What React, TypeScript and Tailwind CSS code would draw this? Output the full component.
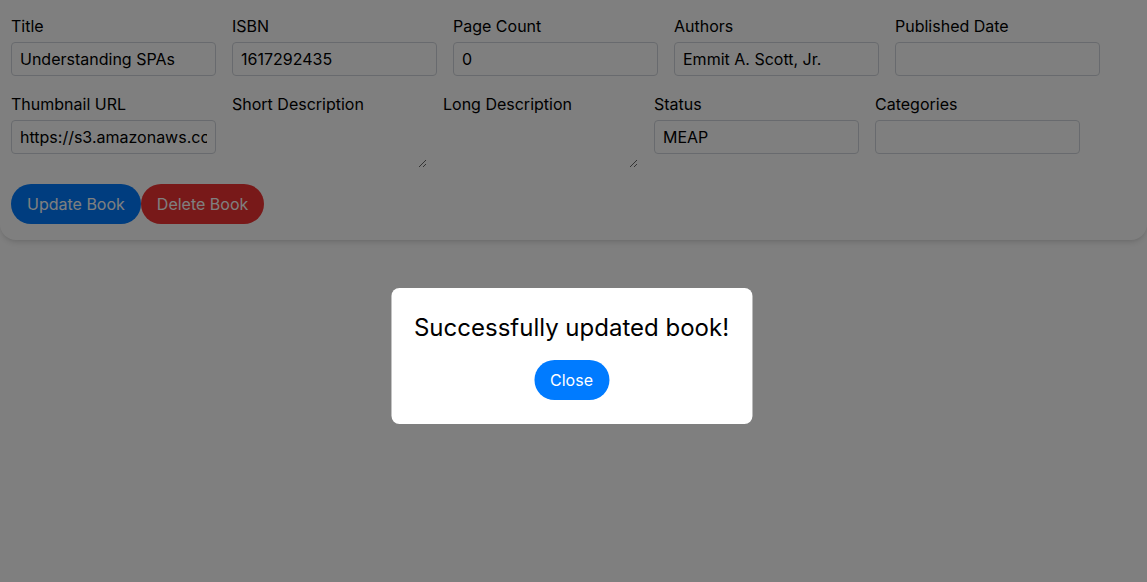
import React from "react";

type Field = { label: string; value?: string; kind?: "input" | "textarea" };

const fields: Field[] = [
    { label: "Title", value: "Understanding SPAs" },
    { label: "ISBN", value: "1617292435" },
    { label: "Page Count", value: "0" },
    { label: "Authors", value: "Emmit A. Scott, Jr." },
    { label: "Published Date", value: "" },
    { label: "Thumbnail URL", value: "https://s3.amazonaws.com/AKIAJC5RLADLUMVRPFDQ.book-thumb-images/scott.jpg" },
    { label: "Short Description", kind: "textarea" },
    { label: "Long Description", kind: "textarea" },
    { label: "Status", value: "MEAP" },
    { label: "Categories", value: "" },
];

function FormField({ field }: { field: Field }) {
    return (
        <div className="flex flex-col">
            <label className="text-base leading-6 text-black mb-1">{field.label}</label>
            {field.kind === "textarea" ? (
                <textarea
                    readOnly
                    className="w-[195px] h-[48px] bg-transparent outline-none resize-y text-base"
                />
            ) : (
                <input
                    readOnly
                    value={field.value}
                    className="w-[205px] h-[34px] px-2 border border-gray-300 rounded text-base text-black bg-white outline-none"
                />
            )}
        </div>
    );
}

export default function App() {
    return (
        <div className="relative min-h-[582px] bg-white font-['Inter',sans-serif]">
            <div className="bg-white rounded-b-2xl shadow-md pt-[14px] pb-4 pl-[11px] pr-4">
                <div className="flex flex-wrap gap-x-4 gap-y-4">
                    {fields.map((f) => (
                        <FormField key={f.label} field={f} />
                    ))}
                </div>
                <div className="flex mt-4">
                    <button className="h-10 px-4 rounded-full bg-[#007bff] text-white text-base">Update Book</button>
                    <button className="h-10 px-4 rounded-full bg-[#f03232] text-white text-base">Delete Book</button>
                </div>
            </div>

            <div className="fixed inset-0 bg-black/50">
                <div className="absolute top-[288px] left-1/2 -translate-x-1/2 -ml-[2px] bg-white rounded-lg py-6 px-[23px] flex flex-col items-center gap-4">
                    <p className="text-2xl leading-8 text-black whitespace-nowrap">Successfully updated book!</p>
                    <button className="h-10 px-4 rounded-full bg-[#007bff] text-white text-base">Close</button>
                </div>
            </div>
        </div>
    );
}
